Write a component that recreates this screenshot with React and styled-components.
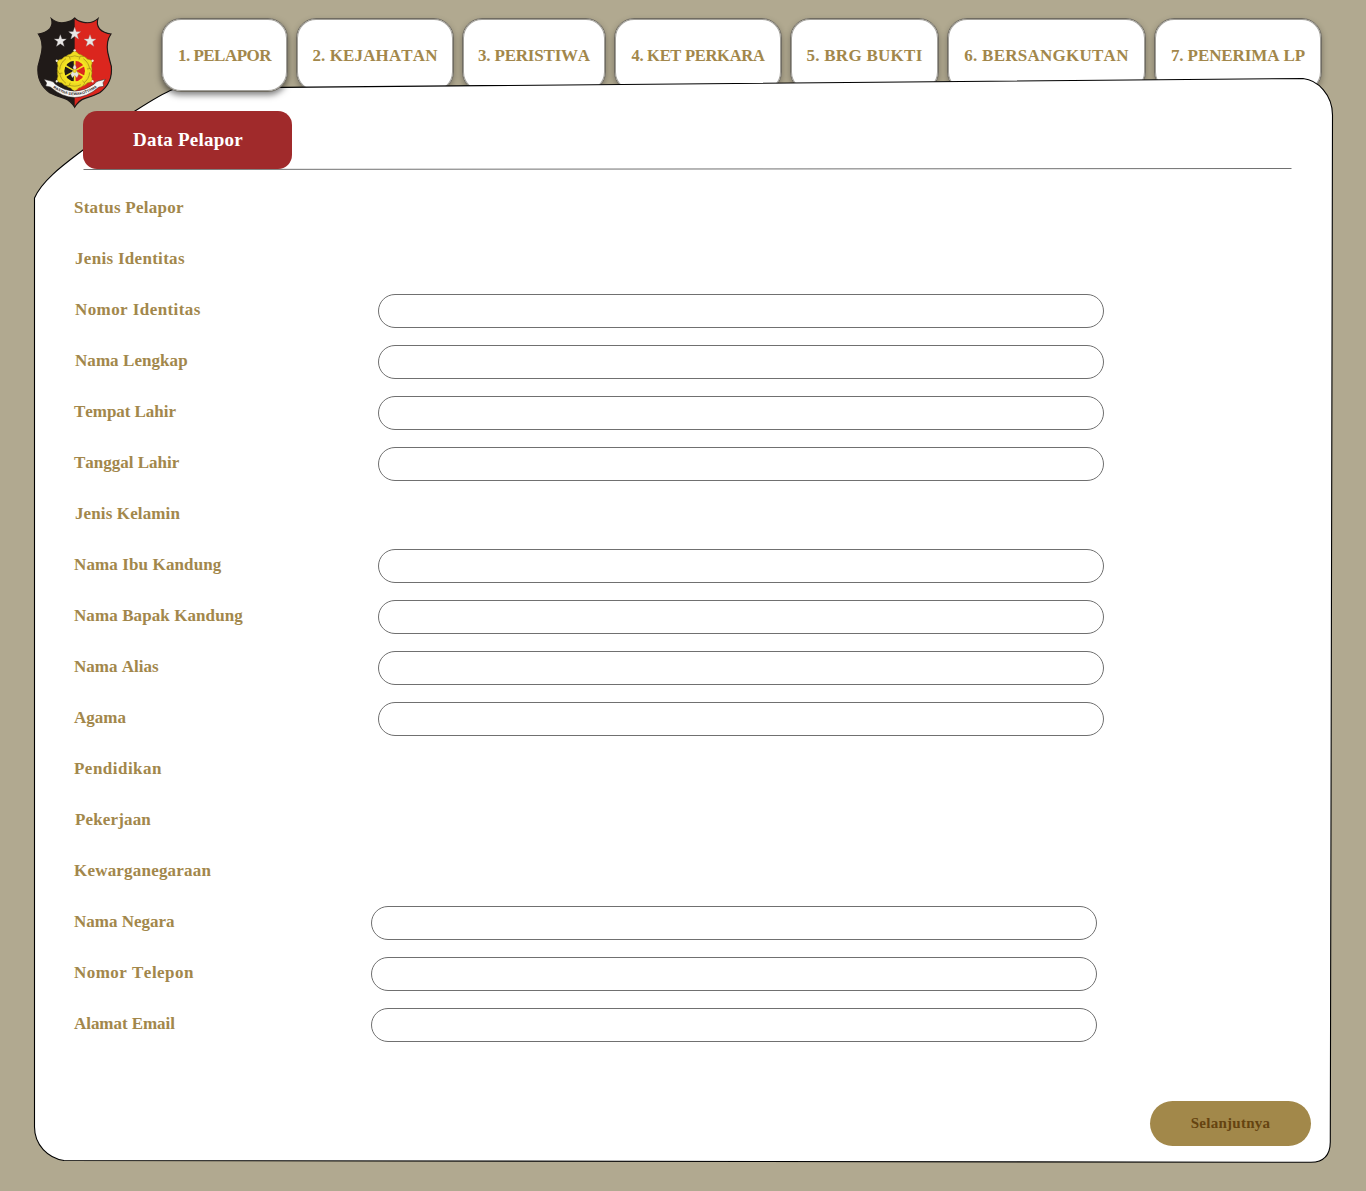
import React from 'react';
import styled, { createGlobalStyle, css } from 'styled-components';

const gold = '#a2874b';

const GlobalStyle = createGlobalStyle`
  *, *::before, *::after { box-sizing: border-box; }
  body {
    margin: 0;
    background: #b1a990;
    font-family: 'Liberation Serif', 'Times New Roman', serif;
    font-kerning: none;
  }
`;

const Page = styled.div`
  position: relative;
  width: 1366px;
  height: 1191px;
  overflow: hidden;
  display: flex;
  flex-direction: column;
`;

const Sheet = styled.svg`
  position: absolute;
  inset: 0;
  z-index: 1;
  pointer-events: none;
`;

const Header = styled.header`
  display: flex;
  align-items: flex-start;
  height: 111px;
  padding: 5px 0 0 25px;
`;

const Emblem = styled.svg`
  flex: none;
  width: 100px;
  height: 110px;
`;

const Tabs = styled.nav`
  display: flex;
  gap: 8px;
  padding: 13px 0 0 36px;
`;

const Tab = styled.button`
  flex: none;
  width: ${(p) => p.$width}px;
  height: 74px;
  padding: 1px 0 0;
  border: 1px solid #706c62;
  border-radius: 20px;
  background: #fff;
  box-shadow: inset 0 0 0 1px rgba(100, 96, 86, 0.6), 0 3px 6px rgba(0, 0, 0, 0.3);
  color: ${gold};
  font: bold ${(p) => p.$size || 17}px 'Liberation Serif', 'Times New Roman', serif;
  font-kerning: none;
  letter-spacing: ${(p) => p.$tracking}px;
  white-space: nowrap;
  ${(p) =>
    p.$active &&
    css`
      position: relative;
      z-index: 2;
      box-shadow: inset 0 0 0 1px rgba(100, 96, 86, 0.6), 0 3px 6px rgba(0, 0, 0, 0.5);
    `}
`;

const Content = styled.main`
  position: relative;
  z-index: 3;
  flex: 1;
  display: flex;
  flex-direction: column;
  padding: 0 55px 45px 74px;
`;

const SectionHead = styled.div`
  width: 1208px;
  height: 59px;
  margin-left: 9px;
`;

const SectionTitle = styled.h1`
  width: 209px;
  height: 58px;
  margin: 0;
  padding-left: 1px;
  border-radius: 14px;
  background: #a02a2b;
  color: #fff;
  font-size: 19px;
  line-height: 57px;
  letter-spacing: 0.25px;
  text-align: center;
`;

const Form = styled.form`
  display: flex;
  flex-direction: column;
  gap: 1px;
  padding-top: 14px;
`;

const Row = styled.label`
  display: flex;
  align-items: center;
  height: 50px;
`;

const Label = styled.span`
  flex: none;
  width: ${(p) => p.$column}px;
  padding: 0 0 3px ${(p) => p.$indent || 0}px;
  color: ${gold};
  font-size: 17px;
  font-weight: bold;
  line-height: 20px;
  letter-spacing: ${(p) => p.$tracking}px;
`;

const Input = styled.input`
  width: 726px;
  height: 34px;
  padding: 0 16px;
  border: 1px solid #707070;
  border-radius: 17px;
  background: #fff;
  outline: none;
`;

const Next = styled.button`
  align-self: flex-end;
  margin-top: auto;
  width: 161px;
  height: 45px;
  padding: 0;
  border: 0;
  border-radius: 23px;
  background: #a2884a;
  color: #654310;
  font: bold 15px 'Liberation Serif', 'Times New Roman', serif;
  font-kerning: none;
  letter-spacing: 0.27px;
`;

const tabs = [
  { text: '1. PELAPOR', width: 127, tracking: -0.5, active: true },
  { text: '2. KEJAHATAN', width: 158, tracking: 0.12 },
  { text: '3. PERISTIWA', width: 144, tracking: -0.2 },
  { text: '4. KET PERKARA', width: 168, tracking: -0.28, size: 16.5 },
  { text: '5. BRG BUKTI', width: 149, tracking: 0.27 },
  { text: '6. BERSANGKUTAN', width: 199, tracking: 0.25 },
  { text: '7. PENERIMA LP', width: 168, tracking: -0.1 },
];

const fields = [
  { text: 'Status Pelapor', tracking: 0.25 },
  { text: 'Jenis Identitas', tracking: 0.3, indent: 1 },
  { text: 'Nomor Identitas', tracking: 0.42, indent: 1, input: true },
  { text: 'Nama Lengkap', tracking: 0.06, indent: 1, input: true },
  { text: 'Tempat Lahir', tracking: -0.05, input: true },
  { text: 'Tanggal Lahir', tracking: 0, input: true },
  { text: 'Jenis Kelamin', tracking: 0.12, indent: 1 },
  { text: 'Nama Ibu Kandung', tracking: 0.12, input: true },
  { text: 'Nama Bapak Kandung', tracking: 0.09, input: true },
  { text: 'Nama Alias', tracking: 0, input: true },
  { text: 'Agama', tracking: 0, input: true },
  { text: 'Pendidikan', tracking: 0.48 },
  { text: 'Pekerjaan', tracking: 0.15, indent: 1 },
  { text: 'Kewarganegaraan', tracking: 0.2 },
  { text: 'Nama Negara', tracking: 0, input: true, column: 297 },
  { text: 'Nomor Telepon', tracking: 0.47, input: true, column: 297 },
  { text: 'Alamat Email', tracking: -0.05, input: true, column: 297 },
];

const STAR = 'M0-19 L4.6-6 18-6 7.4 2.5 11.5 16 0 8 -11.5 16 -7.4 2.5 -18-6 -4.6-6Z';
const SHIELD =
  'M79 41 Q98 57 122 52 Q140 49 149 39 Q158 49 176 52 Q200 57 219 41 Q213 58 224 72 Q236 84 258 87 Q243 108 248 141 Q253 163 259 184 Q264 234 224 263 Q205 273 180 280 Q161 286 149 307 Q137 286 118 280 Q93 273 74 263 Q34 234 39 184 Q45 163 50 141 Q55 108 40 87 Q62 84 74 72 Q85 58 79 41Z';

function PoliceEmblem() {
  const spokes = [0, 60, 120, 180, 240, 300];
  const lobes = [0, 60, 120, 180, 240, 300];
  return (
    <Emblem viewBox="0 0 300 330" aria-hidden="true">
      <defs>
        <clipPath id="rightHalf">
          <rect x="149" y="30" width="120" height="285" />
        </clipPath>
      </defs>
      <path d={SHIELD} fill="#201a18" />
      <path d={SHIELD} fill="#db261e" clipPath="url(#rightHalf)" />
      <path d={SHIELD} fill="none" stroke="#201a18" strokeWidth="3.5" />
      <g fill="#e9e7e6" stroke="#aaa3a3" strokeWidth="1">
        <path d={STAR} transform="translate(149 86)" />
        <path d={STAR} transform="translate(106 108)" />
        <path d={STAR} transform="translate(195 108)" />
      </g>
      <g transform="translate(149 198)">
        {lobes.map((a) => (
          <g key={a} transform={`rotate(${a})`}>
            <path
              d="M-30-37 Q-24-50 -12-51 Q-6-59 0-60 Q6-59 12-51 Q24-50 30-37 L20-24 H-20Z"
              fill="#efdc22"
              stroke="#8a7a12"
              strokeWidth="1.5"
            />
            <path d="M-19-41 Q0-50 19-41" fill="none" stroke="#9c8a18" strokeWidth="2" />
            <circle cy="-62" r="3.5" fill="#eee9dc" />
          </g>
        ))}
        <circle r="33" fill="#201a18" />
        <path d="M0-33 A33 33 0 0 1 0 33Z" fill="#db261e" />
        <circle r="34" fill="none" stroke="#f6e622" strokeWidth="6" />
        {spokes.map((a) => (
          <path key={a} d="M-3-33 H3 L2 0 H-2Z" fill="#f6e622" transform={`rotate(${a})`} />
        ))}
        <path d="M0-20 L5-11 3-4 12 10 7 20 0 13 -7 20 -12 10 -3-4 -5-11Z" fill="#e8e6df" stroke="#8e877c" />
        <circle r="5" fill="#f3df20" stroke="#8f8014" />
      </g>
      <path
        d="M57 223 L78 228 Q87 230 90 237 Q149 280 208 237 Q212 230 220 228 L241 223 L234 233 L236 244 L222 246 Q149 309 76 246 L62 243 L65 234Z"
        fill="#f5f4f2"
        stroke="#292321"
        strokeWidth="1.5"
      />
      <path id="motto" d="M84 248 Q149 293 216 247" fill="none" />
      <text fontFamily="Liberation Sans, Arial, sans-serif" fontWeight="bold" fontSize="11" fill="#292321">
        <textPath href="#motto" textLength="142" lengthAdjust="spacingAndGlyphs">
          RASTRA SEWAKOTTAMA
        </textPath>
      </text>
    </Emblem>
  );
}

export default function App() {
  return (
    <>
      <GlobalStyle />
      <Page>
        <Sheet width="1366" height="1191" viewBox="0 0 1366 1191" aria-hidden="true">
          <path
            d="M34.5 198 C42 180 66 163 83 150 C102 136 116 124 135 111 Q163 93 173 89.5 Q178 88 188 88 L283 87.4 L1303 78.5 C1318 80 1332.5 95 1332.5 115 L1330.3 1142 Q1330 1162 1311 1162.3 L64 1160.5 C48 1158 34.5 1145 34.5 1127Z"
            fill="#fff"
            stroke="#000"
            strokeWidth="1.1"
          />
          <path d="M83.5 169.5 L1291.5 168.5" stroke="#707070" strokeWidth="1" />
        </Sheet>
        <Header>
          <PoliceEmblem />
          <Tabs>
            {tabs.map((t) => (
              <Tab key={t.text} type="button" $width={t.width} $tracking={t.tracking} $size={t.size} $active={t.active}>
                {t.text}
              </Tab>
            ))}
          </Tabs>
        </Header>
        <Content>
          <SectionHead>
            <SectionTitle>Data Pelapor</SectionTitle>
          </SectionHead>
          <Form>
            {fields.map((f) => (
              <Row key={f.text}>
                <Label $column={f.column || 304} $tracking={f.tracking} $indent={f.indent}>
                  {f.text}
                </Label>
                {f.input && <Input type="text" />}
              </Row>
            ))}
          </Form>
          <Next type="button">Selanjutnya</Next>
        </Content>
      </Page>
    </>
  );
}
